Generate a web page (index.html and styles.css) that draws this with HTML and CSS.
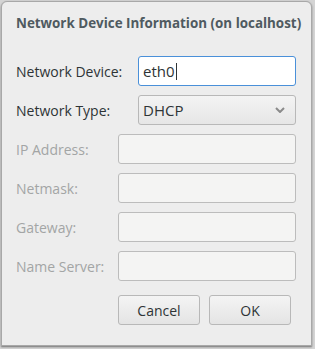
FILE: index.html
```html
<!DOCTYPE html>
<html>
<head>
<meta charset="utf-8">
<link rel="stylesheet" href="styles.css">
</head>
<body>
<div class="dialog">
  <div class="title">Network Device Information (on localhost)</div>
  <div class="group main">
    <div class="row">
      <span class="label">Network Device:</span>
      <div class="field active"><span class="val">eth0</span><span class="cursor"></span></div>
    </div>
    <div class="row">
      <span class="label">Network Type:</span>
      <div class="field combo"><span class="val">DHCP</span>
        <svg class="chev" width="10" height="6" viewBox="0 0 10 6"><path d="M1 1 L5 5 L9 1" fill="none" stroke="#8a8a8a" stroke-width="2"/></svg>
      </div>
    </div>
  </div>
  <div class="group sub">
    <div class="row"><span class="label dis">IP Address:</span><div class="field disabled"></div></div>
    <div class="row"><span class="label dis">Netmask:</span><div class="field disabled"></div></div>
    <div class="row"><span class="label dis">Gateway:</span><div class="field disabled"></div></div>
    <div class="row"><span class="label dis">Name Server:</span><div class="field disabled"></div></div>
  </div>
  <div class="buttons">
    <button class="btn">Cancel</button>
    <button class="btn">OK</button>
  </div>
</div>
</body>
</html>
```
FILE: styles.css
```css
html, body {
  margin: 0;
  padding: 0;
}
body {
  width: 315px;
  height: 349px;
  background: #d4d4d4;
  font-family: "Open Sans", "DejaVu Sans", sans-serif;
  overflow: hidden;
}
.dialog {
  box-sizing: border-box;
  margin: 1px 0 0 1px;
  width: 311px;
  height: 345px;
  background: #ededed;
  border: 1px solid #a8a8a8;
  border-radius: 6px 6px 0 0;
  box-shadow: 0 1px 2px rgba(0,0,0,0.45);
  padding: 0 14px;
  display: flex;
  flex-direction: column;
}
.title {
  height: 45px;
  line-height: 42px;
  font-size: 13.4px;
  font-weight: bold;
  color: #4f5a60;
  white-space: nowrap;
}
.group {
  display: flex;
  flex-direction: column;
  gap: 9px;
}
.main { margin-top: 9px; }
.sub { margin-top: 9px; }
.row {
  display: flex;
  align-items: center;
  height: 30px;
}
.label {
  font-size: 14px;
  color: #2e3436;
  white-space: nowrap;
}
.main .label { width: 122px; }
.sub .label { width: 102px; }
.label.dis { color: #a3a5a5; }
.field {
  box-sizing: border-box;
  width: 158px;
  height: 30px;
  border: 1px solid #b8b8b8;
  border-radius: 3px;
  display: flex;
  align-items: center;
  padding-left: 4px;
  font-size: 15px;
  color: #2e3436;
}
.sub .field { width: 178px; }
.field.active {
  background: #ffffff;
  border-color: #4a90d9;
}
.cursor {
  display: inline-block;
  width: 1px;
  height: 17px;
  background: #2e3436;
  margin-left: 1px;
}
.field.combo {
  background: linear-gradient(#f4f4f4, #e6e6e6);
  justify-content: space-between;
  padding-right: 10px;
}
.field.disabled {
  background: #f4f4f3;
  border-color: #bcbcbc;
}
.buttons {
  display: flex;
  justify-content: flex-end;
  gap: 9px;
  margin-top: 14px;
  padding-right: 6px;
}
.btn {
  box-sizing: border-box;
  width: 82px;
  height: 30px;
  border: 1px solid #b8b8b8;
  border-radius: 3px;
  background: linear-gradient(#f4f4f4, #e4e4e4);
  font-family: "Open Sans", "DejaVu Sans", sans-serif;
  font-size: 14px;
  color: #2e3436;
  padding: 0;
}
```
